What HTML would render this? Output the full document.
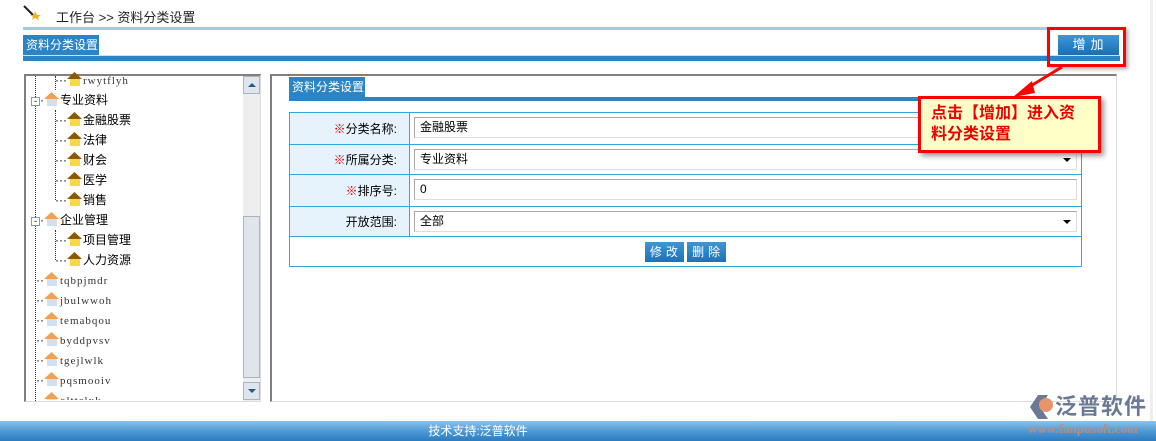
<!DOCTYPE html>
<html><head><meta charset="utf-8"><style>
*{margin:0;padding:0;box-sizing:border-box}
body{width:1156px;height:441px;background:#fff;position:relative;overflow:hidden;font-family:"Liberation Sans","Noto Sans CJK SC","WenQuanYi Zen Hei",sans-serif;font-size:12px;color:#000}
.a{position:absolute}
.tab{background:#2a84c6;color:#fff;font-size:12px;line-height:20px;padding-left:3px}
.tree div{position:absolute;height:20px;line-height:20px;font-size:12px;white-space:nowrap}
.tree .en{font-family:"Liberation Serif","DejaVu Serif",serif;font-size:11px;letter-spacing:1px;color:#333}
.vd{position:absolute;border-left:1px dotted #333;width:0}
.h1{display:inline-block;width:15px;height:14px;vertical-align:-2px;margin-right:1px;background:linear-gradient(#f0a050,#f0a050) 0 0/15px 7px no-repeat,linear-gradient(#cfe0f4,#cfe0f4) 3px 7px/10px 7px no-repeat;clip-path:polygon(50% 0,100% 50%,88% 50%,88% 100%,12% 100%,12% 50%,0 50%)}
.h2{display:inline-block;width:15px;height:14px;vertical-align:-2px;margin-right:1px;background:linear-gradient(#8a5a00,#8a5a00) 0 0/15px 7px no-repeat,linear-gradient(#f5d84a,#f5d84a) 3px 7px/10px 7px no-repeat;clip-path:polygon(50% 0,100% 50%,88% 50%,88% 100%,12% 100%,12% 50%,0 50%)}
table{table-layout:fixed}
td{border:1px solid #2fa8e0;padding:0}
.lab{background:#e6f2fc;text-align:right;padding-right:12px;font-size:12px}
.lab b{color:#e00;font-weight:normal}
.inp{position:absolute;left:4px;top:4px;right:4px;height:21px;border:1px solid #a8a8a8;border-right-color:#ddd;border-bottom-color:#ddd;padding-left:5px;line-height:19px;font-size:12px;background:#fff}
.btn{display:inline-block;white-space:nowrap;background:linear-gradient(#3d96d6,#1e72b8);color:#fff;width:39px;height:20px;line-height:20px;text-align:center;letter-spacing:4px;padding-left:3px;font-size:12px;vertical-align:top}
</style></head><body>
<svg class="a" style="left:22px;top:4px" width="20" height="16"><line x1="2" y1="2" x2="11" y2="11" stroke="#222" stroke-width="2"/><polygon points="13,7 15,11 19,11 16,13 17,16 13,14 10,16 11,13 8,11 12,11" fill="#f2b21c"/></svg>
<div class="a" style="left:56px;top:7px;font-size:13px;color:#222">工作台 &gt;&gt; 资料分类设置</div>
<div class="a" style="left:23px;top:27px;width:1097px;height:3px;background:#9fcbeb"></div>
<div class="a tab" style="left:23px;top:35px;width:76px;height:20px">资料分类设置</div>
<div class="a" style="left:23px;top:55px;width:1097px;height:2px;background:#ddd"></div>
<div class="a" style="left:23px;top:56px;width:1097px;height:5px;background:#2a84c6"></div>
<div class="a" style="left:1058px;top:35px;width:61px;height:20px;background:linear-gradient(#3b97d8,#1a6fb5);color:#fff;font-size:13px;line-height:20px;text-align:center;letter-spacing:5px;padding-left:4px">增加</div>
<div class="a" style="left:1047px;top:27px;width:79px;height:40px;border:3px solid #f00;box-shadow:2px 2px 4px rgba(0,0,0,.35)"></div>
<div class="a" style="left:24px;top:74px;width:237px;height:328px;border-left:2px solid #808080;border-top:2px solid #808080;border-bottom:1px solid #ddd;border-right:1px solid #ddd;overflow:hidden">
 <div class="a" style="right:0;top:0;width:17px;height:326px;background:#eee"></div>
 <div class="a" style="right:0;top:0;width:17px;height:18px;background:#dfe5ea;border:1px solid #a8b4bf"><div style="margin:6px auto 0;width:0;height:0;border-left:4px solid transparent;border-right:4px solid transparent;border-bottom:4px solid #1a5a9a"></div></div>
 <div class="a" style="right:0;top:140px;width:17px;height:162px;background:#dfe5ea;border:1px solid #a8b4bf"></div>
 <div class="a" style="right:0;top:306px;width:17px;height:18px;background:#dfe5ea;border:1px solid #a8b4bf"><div style="margin:6px auto 0;width:0;height:0;border-left:4px solid transparent;border-right:4px solid transparent;border-top:4px solid #1a5a9a"></div></div>
</div>
<div class="tree">
 <div class="vd" style="left:35px;top:76px;height:325px"></div>
 <div class="vd" style="left:55px;top:76px;height:14px"></div>
 <div class="vd" style="left:55px;top:110px;height:90px"></div>
 <div class="vd" style="left:55px;top:230px;height:30px"></div>
 <div style="left:55px;top:70px">···<i class="h2"></i><span class="en">rwytflyh</span></div>
 <div style="left:31px;top:90px"><span style="display:inline-block;width:9px;height:9px;border:1px solid #8899aa;background:#fff;font-size:9px;line-height:6px;text-align:center">-</span>·<i class="h1"></i>专业资料</div>
 <div style="left:55px;top:110px">···<i class="h2"></i>金融股票</div>
 <div style="left:55px;top:130px">···<i class="h2"></i>法律</div>
 <div style="left:55px;top:150px">···<i class="h2"></i>财会</div>
 <div style="left:55px;top:170px">···<i class="h2"></i>医学</div>
 <div style="left:55px;top:190px">···<i class="h2"></i>销售</div>
 <div style="left:31px;top:210px"><span style="display:inline-block;width:9px;height:9px;border:1px solid #8899aa;background:#fff;font-size:9px;line-height:6px;text-align:center">-</span>·<i class="h1"></i>企业管理</div>
 <div style="left:55px;top:230px">···<i class="h2"></i>项目管理</div>
 <div style="left:55px;top:250px">···<i class="h2"></i>人力资源</div>
 <div style="left:36px;top:270px">··<i class="h1"></i><span class="en">tqbpjmdr</span></div>
 <div style="left:36px;top:290px">··<i class="h1"></i><span class="en">jbulwwoh</span></div>
 <div style="left:36px;top:310px">··<i class="h1"></i><span class="en">temabqou</span></div>
 <div style="left:36px;top:330px">··<i class="h1"></i><span class="en">byddpvsv</span></div>
 <div style="left:36px;top:350px">··<i class="h1"></i><span class="en">tgejlwlk</span></div>
 <div style="left:36px;top:370px">··<i class="h1"></i><span class="en">pqsmooiv</span></div>
 <div style="left:36px;top:390px;height:10px;overflow:hidden">··<i class="h1"></i><span class="en">olttclxk</span></div>
</div>
<div class="a" style="left:270px;top:74px;width:847px;height:328px;border-left:2px solid #808080;border-top:2px solid #808080;border-right:1px solid #ddd;border-bottom:1px solid #ddd"></div>
<div class="a" style="left:1150px;top:0;width:3px;height:421px;background:#eee"></div>
<div class="a tab" style="left:289px;top:77px;width:76px;height:20px">资料分类设置</div>
<div class="a" style="left:289px;top:97px;width:793px;height:4px;background:#2a84c6"></div>
<table class="a" style="left:289px;top:112px;width:793px;border-collapse:collapse">
 <colgroup><col style="width:120px"><col></colgroup>
 <tr style="height:32px"><td class="lab"><b>※</b>分类名称:</td><td style="position:relative"><div class="inp">金融股票</div></td></tr>
 <tr style="height:30px"><td class="lab"><b>※</b>所属分类:</td><td style="position:relative"><div class="inp">专业资料</div><div class="a" style="right:10px;top:13px;border-left:4px solid transparent;border-right:4px solid transparent;border-top:4px solid #000"></div></td></tr>
 <tr style="height:32px"><td class="lab"><b>※</b>排序号:</td><td style="position:relative"><div class="inp">0</div></td></tr>
 <tr style="height:30px"><td class="lab">开放范围:</td><td style="position:relative"><div class="inp">全部</div><div class="a" style="right:10px;top:13px;border-left:4px solid transparent;border-right:4px solid transparent;border-top:4px solid #000"></div></td></tr>
 <tr style="height:30px"><td colspan="2" style="text-align:center;line-height:0"><span class="btn">修改</span> <span class="btn">删除</span></td></tr>
</table>
<svg class="a" style="left:1010px;top:64px" width="60" height="36"><line x1="52" y1="3" x2="14" y2="26" stroke="#f00" stroke-width="3"/><polygon points="3,33 22,17 25,29" fill="#f00"/></svg>
<div class="a" style="left:918px;top:96px;width:183px;height:57px;background:#ffffc8;border:3px solid #f00;box-shadow:3px 3px 5px rgba(0,0,0,.4);color:#e00;font-weight:bold;font-size:16px;line-height:21px;padding:4px 0 0 10px;white-space:nowrap">点击【增加】进入资<br>料分类设置</div>
<div class="a" style="left:0;top:421px;width:1156px;height:20px;background:linear-gradient(#8cc3ea,#4f9ad6 50%,#2a7bc0);color:#fff;text-align:center;line-height:20px;font-size:12px;padding-right:200px">技术支持:泛普软件</div>
<svg class="a" style="left:1028px;top:393px" width="28" height="28"><polygon points="2,14 10,2 20,2 12,14 20,26 10,26" fill="#6a7a96"/><circle cx="18" cy="12" r="7" fill="#e8946a"/></svg>
<div class="a" style="left:1055px;top:394px;font-size:22px;font-weight:bold;color:#6a7a96;line-height:26px;letter-spacing:1px">泛普软件</div>
<div class="a" style="left:1028px;top:421px;font-family:'Liberation Serif',serif;font-size:13px;font-weight:bold;color:#c08a7a;line-height:16px">www.fanpusoft.com</div>
</body></html>
